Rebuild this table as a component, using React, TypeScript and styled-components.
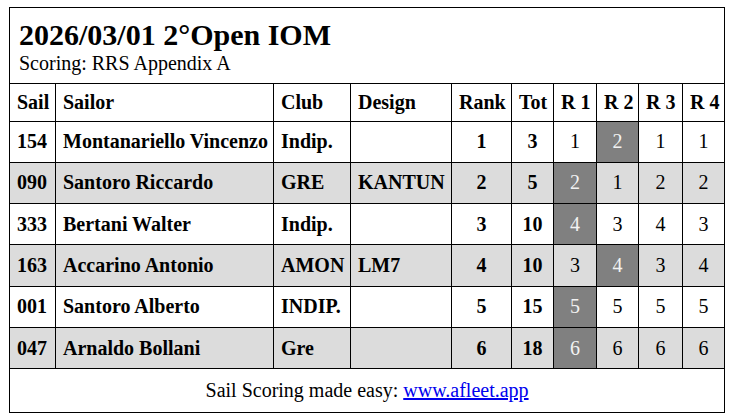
import styled, { createGlobalStyle } from 'styled-components';

interface IResult {
  sail: string;
  sailor: string;
  club: string;
  design: string;
  rank: number;
  tot: number;
  races: number[];
  discard: number;
}

const RESULTS: IResult[] = [
  { sail: '154', sailor: 'Montanariello Vincenzo', club: 'Indip.', design: '', rank: 1, tot: 3, races: [1, 2, 1, 1], discard: 1 },
  { sail: '090', sailor: 'Santoro Riccardo', club: 'GRE', design: 'KANTUN', rank: 2, tot: 5, races: [2, 1, 2, 2], discard: 0 },
  { sail: '333', sailor: 'Bertani Walter', club: 'Indip.', design: '', rank: 3, tot: 10, races: [4, 3, 4, 3], discard: 0 },
  { sail: '163', sailor: 'Accarino Antonio', club: 'AMON', design: 'LM7', rank: 4, tot: 10, races: [3, 4, 3, 4], discard: 1 },
  { sail: '001', sailor: 'Santoro Alberto', club: 'INDIP.', design: '', rank: 5, tot: 15, races: [5, 5, 5, 5], discard: 0 },
  { sail: '047', sailor: 'Arnaldo Bollani', club: 'Gre', design: '', rank: 6, tot: 18, races: [6, 6, 6, 6], discard: 0 },
];

const COL_WIDTHS = [46, 218, 77, 101, 60, 42, 43, 42, 44, 42];

export default function App() {
  return (
    <>
      <GlobalStyle />
      <Page>
        <Table>
          <colgroup>
            {COL_WIDTHS.map((w, i) => (
              <col key={i} style={{ width: w }} />
            ))}
          </colgroup>
          <thead>
            <tr>
              <TitleCell colSpan={10}>
                <Title>2026/03/01 2°Open IOM</Title>
                <Subtitle>Scoring: RRS Appendix A</Subtitle>
              </TitleCell>
            </tr>
            <HeadRow>
              <Th>Sail</Th>
              <Th>Sailor</Th>
              <Th>Club</Th>
              <Th>Design</Th>
              <Th $center>Rank</Th>
              <Th $center>Tot</Th>
              <Th $center>R 1</Th>
              <Th $center>R 2</Th>
              <Th $center>R 3</Th>
              <Th $center>R 4</Th>
            </HeadRow>
          </thead>
          <tbody>
            {RESULTS.map((r, idx) => (
              <Row key={r.sail} $striped={idx % 2 === 1}>
                <Td>{r.sail}</Td>
                <Td>{r.sailor}</Td>
                <Td>{r.club}</Td>
                <Td>{r.design}</Td>
                <Td $center>{r.rank}</Td>
                <Td $center>{r.tot}</Td>
                {r.races.map((p, i) => (
                  <RaceTd key={i} $discard={i === r.discard}>
                    {p}
                  </RaceTd>
                ))}
              </Row>
            ))}
          </tbody>
          <tfoot>
            <tr>
              <FootCell colSpan={10}>
                Sail Scoring made easy: <FootLink href="#">www.afleet.app</FootLink>
              </FootCell>
            </tr>
          </tfoot>
        </Table>
      </Page>
    </>
  );
}

const GlobalStyle = createGlobalStyle`
  body {
    margin: 0;
    background: #fff;
    font-family: 'Liberation Serif', 'Times New Roman', serif;
    color: #000;
  }
`;

const Page = styled.div`
  padding: 7px 0 0 9px;
`;

const Table = styled.table`
  width: 715px;
  table-layout: fixed;
  border-collapse: collapse;
  border: 1px solid #000;
  font-family: 'Liberation Serif', 'Times New Roman', serif;
  font-size: 20px;
`;

const TitleCell = styled.th`
  height: 75px;
  padding: 0 9px;
  text-align: left;
  vertical-align: middle;
  border: 1px solid #000;
`;

const Title = styled.div`
  font-size: 30px;
  font-weight: bold;
  line-height: 34px;
`;

const Subtitle = styled.div`
  font-size: 20px;
  font-weight: normal;
  line-height: 22px;
`;

const HeadRow = styled.tr`
  height: 37.5px;
`;

const Th = styled.th<{ $center?: boolean }>`
  padding: 0 7px;
  border: 1px solid #000;
  font-weight: bold;
  text-align: ${(p) => (p.$center ? 'center' : 'left')};
  white-space: nowrap;
`;

const Row = styled.tr<{ $striped: boolean }>`
  height: 41.3px;
  background: ${(p) => (p.$striped ? '#dcdcdc' : '#fff')};
`;

const Td = styled.td<{ $center?: boolean }>`
  padding: 0 7px;
  border: 1px solid #000;
  font-weight: bold;
  text-align: ${(p) => (p.$center ? 'center' : 'left')};
  white-space: nowrap;
`;

const RaceTd = styled.td<{ $discard: boolean }>`
  padding: 0;
  border: 1px solid #000;
  text-align: center;
  background: ${(p) => (p.$discard ? '#808080' : 'transparent')};
  color: ${(p) => (p.$discard ? '#f2f2f2' : '#000')};
`;

const FootCell = styled.td`
  height: 41px;
  border: 1px solid #000;
  text-align: center;
`;

const FootLink = styled.a`
  color: #0000ee;
`;
